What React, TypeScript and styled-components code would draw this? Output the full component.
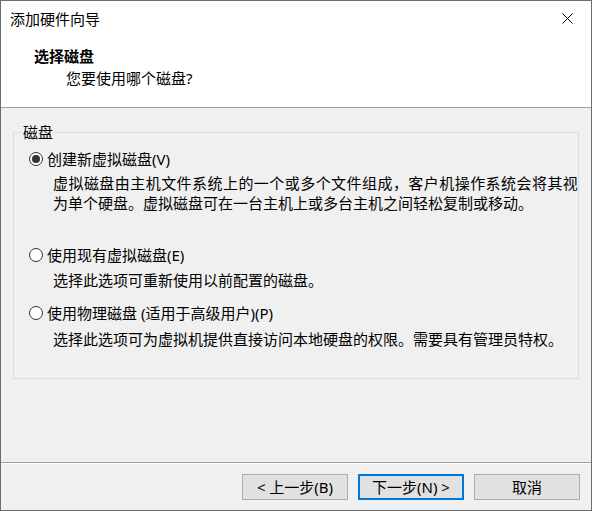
import React from 'react';
import styled, { createGlobalStyle } from 'styled-components';

const GlobalStyle = createGlobalStyle`
  html, body {
    margin: 0;
    padding: 0;
    background: #ffffff;
  }
  body {
    font-family: "Noto Sans", "Noto Sans CJK SC", sans-serif;
    font-size: 15px;
    color: #000;
  }
`;

const Window = styled.div`
  box-sizing: border-box;
  width: 592px;
  height: 511px;
  border: 1px solid #6d6d6d;
  background: #f0f0f0;
  display: flex;
  flex-direction: column;
`;

const TitleBar = styled.div`
  height: 35px;
  background: #fff;
  display: flex;
  align-items: center;
  justify-content: space-between;
  padding-left: 9px;
`;

const TitleText = styled.span`
  font-size: 15px;
  line-height: 20px;
`;

const CloseButton = styled.div`
  width: 44px;
  height: 35px;
  display: flex;
  align-items: center;
  justify-content: center;
  margin-right: 2px;
`;

const Header = styled.div`
  background: #fff;
  height: 72px;
  border-bottom: 1px solid #a0a0a0;
  padding-top: 10px;
  box-sizing: border-box;
`;

const HeaderTitle = styled.div`
  padding-left: 33px;
  font-weight: 700;
  font-family: "Noto Sans CJK SC", sans-serif;
  line-height: 20px;
`;

const HeaderSub = styled.div`
  padding-left: 65px;
  margin-top: 2px;
  line-height: 20px;
`;

const Body = styled.div`
  flex: 1;
  padding: 14px 12px 0;
`;

const Group = styled.fieldset`
  margin: 0;
  padding: 0 0 29px 15px;
  border: 1px solid #dcdcdc;
  min-width: 0;
`;

const Legend = styled.legend`
  margin-left: -7px;
  padding: 0 1px;
  line-height: 20px;
`;

const OptionRow = styled.label<{ $top: number }>`
  display: flex;
  align-items: center;
  margin-top: ${(p) => p.$top}px;
  line-height: 20px;
  height: 20px;
`;

const Radio = styled.span<{ $checked?: boolean }>`
  box-sizing: border-box;
  width: 14px;
  height: 14px;
  border-radius: 50%;
  border: 1px solid #333;
  background: #fff;
  margin-right: 4px;
  display: flex;
  align-items: center;
  justify-content: center;

  &::after {
    content: '';
    width: 8px;
    height: 8px;
    border-radius: 50%;
    background: ${(p) => (p.$checked ? '#333' : 'transparent')};
  }
`;

const Description = styled.div<{ $top: number }>`
  margin-top: ${(p) => p.$top}px;
  padding-left: 24px;
  line-height: 20px;
  white-space: nowrap;
`;

const DescLine = styled.span<{ $spacing?: number }>`
  display: block;
  letter-spacing: ${(p) => p.$spacing ?? 0}px;
`;

const Footer = styled.div`
  height: 48px;
  box-sizing: border-box;
  border-top: 1px solid #a0a0a0;
  box-shadow: inset 0 1px 0 #fff;
  display: flex;
  justify-content: flex-end;
  gap: 10px;
  padding: 11px 11px 0 0;
`;

const Button = styled.button<{ $default?: boolean }>`
  box-sizing: border-box;
  width: 106px;
  height: 26px;
  background: #e1e1e1;
  border: ${(p) => (p.$default ? '2px solid #0078d7' : '1px solid #adadad')};
  font-family: "Noto Sans", "Noto Sans CJK SC", sans-serif;
  font-size: 15px;
  line-height: 20px;
  color: #000;
  padding: 0;
  margin: 0;
`;

export default function App() {
  return (
    <>
      <GlobalStyle />
      <Window>
        <TitleBar>
          <TitleText>添加硬件向导</TitleText>
          <CloseButton>
            <svg width="11" height="11" viewBox="0 0 11 11">
              <path d="M0.5 0.5 L10.5 10.5 M10.5 0.5 L0.5 10.5" stroke="#000" strokeWidth="1" />
            </svg>
          </CloseButton>
        </TitleBar>
        <Header>
          <HeaderTitle>选择磁盘</HeaderTitle>
          <HeaderSub>您要使用哪个磁盘?</HeaderSub>
        </Header>
        <Body>
          <Group>
            <Legend>磁盘</Legend>
            <OptionRow $top={7}>
              <Radio $checked />
              创建新虚拟磁盘(V)
            </OptionRow>
            <Description $top={4}>
              <DescLine $spacing={0.45}>
                虚拟磁盘由主机文件系统上的一个或多个文件组成，客户机操作系统会将其视
              </DescLine>
              <DescLine>为单个硬盘。虚拟磁盘可在一台主机上或多台主机之间轻松复制或移动。</DescLine>
            </Description>
            <OptionRow $top={32}>
              <Radio />
              使用现有虚拟磁盘(E)
            </OptionRow>
            <Description $top={5}>
              <DescLine>选择此选项可重新使用以前配置的磁盘。</DescLine>
            </Description>
            <OptionRow $top={13}>
              <Radio />
              使用物理磁盘 (适用于高级用户)(P)
            </OptionRow>
            <Description $top={6}>
              <DescLine>选择此选项可为虚拟机提供直接访问本地硬盘的权限。需要具有管理员特权。</DescLine>
            </Description>
          </Group>
        </Body>
        <Footer>
          <Button>&lt; 上一步(B)</Button>
          <Button $default>下一步(N) &gt;</Button>
          <Button>取消</Button>
        </Footer>
      </Window>
    </>
  );
}
